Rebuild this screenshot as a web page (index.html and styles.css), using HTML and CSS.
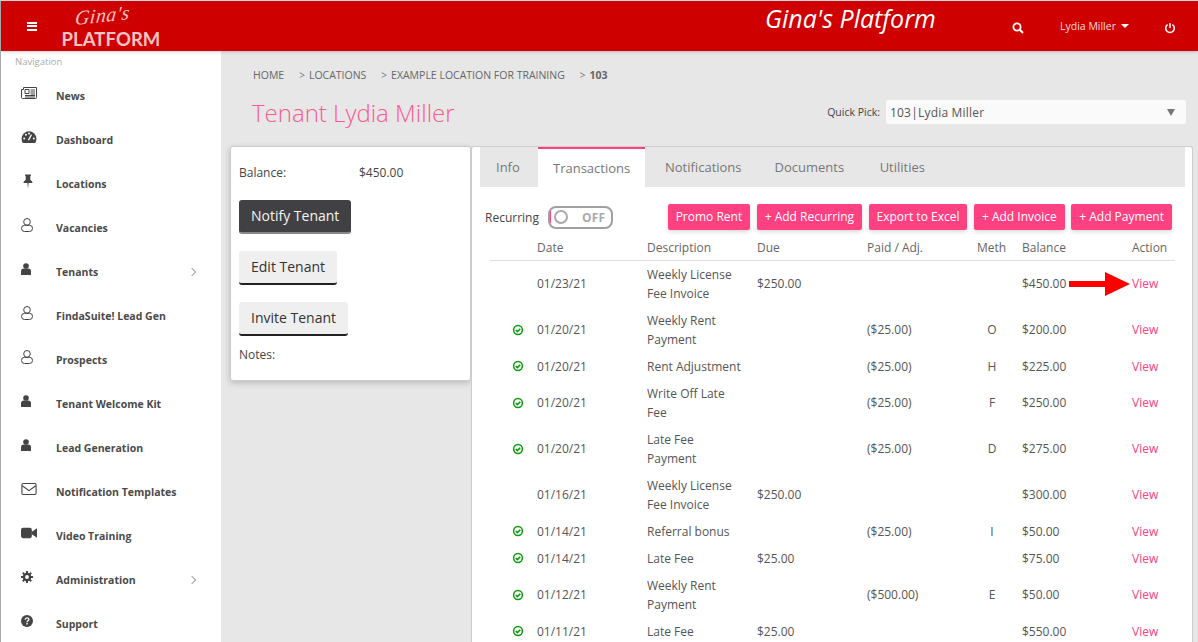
FILE: index.html
```html
<!DOCTYPE html>
<html lang="en">
<head>
<meta charset="utf-8">
<title>Tenant Lydia Miller</title>
<link rel="stylesheet" href="styles.css">
</head>
<body>
<svg class="sprite" xmlns="http://www.w3.org/2000/svg">
  <symbol id="i-check" viewBox="0 0 12 12"><circle cx="6" cy="6" r="4.400" fill="none" stroke="currentColor" stroke-width="1.500"/><path d="M3.800 6l1.600 1.600 2.900-2.900" fill="none" stroke="currentColor" stroke-width="1.500"/></symbol>
  <symbol id="i-user" viewBox="0 0 10 12"><circle cx="5" cy="3" r="2.800" fill="currentColor"/><path d="M0 12V8.200C0 6.600 1.200 5.500 2.600 5.500h4.800C8.800 5.500 10 6.600 10 8.200V12z" fill="currentColor"/></symbol>
  <symbol id="i-user-o" viewBox="0 0 12 14"><ellipse cx="6" cy="3.900" rx="3.300" ry="3.400" fill="none" stroke="currentColor" stroke-width="1"/><rect x=".5" y="7.300" width="11" height="6.200" rx="3" fill="none" stroke="currentColor" stroke-width="1"/></symbol>
</svg>

<header class="topbar">
  <button class="burger" aria-label="Menu"><span></span><span></span><span></span></button>
  <div class="logo"><span class="logo-script">Gina's</span><span class="logo-word">PLATFORM</span></div>
  <div class="brand-title">Gina's Platform</div>
  <svg class="top-search" viewBox="0 0 12 12"><circle cx="5" cy="5" r="3.600" fill="none" stroke="currentColor" stroke-width="1.800"/><path d="M7.800 7.800l3.200 3.200" stroke="currentColor" stroke-width="2"/></svg>
  <div class="top-user">Lydia Miller<span class="caret"></span></div>
  <svg class="top-power" viewBox="0 0 12 12"><path d="M3.600 2.600a4.300 4.300 0 1 0 4.800 0" fill="none" stroke="currentColor" stroke-width="1.500"/><path d="M6 1v5" stroke="currentColor" stroke-width="1.500"/></svg>
</header>

<div class="shell">
  <nav class="sidebar">
    <div class="nav-label">Navigation</div>
    <ul class="nav-list">
      <li class="nav-item"><svg class="nav-icon" viewBox="0 0 16 12"><path d="M2.500.5h13v10a1 1 0 0 1-1 1H1.500a1 1 0 0 1-1-1V2.500h2z" fill="none" stroke="currentColor"/><path d="M4 2.500h4v4H4zM9.500 3H14M9.500 5H14M9.500 7H14M4 8.500h10M4 10h10" fill="none" stroke="currentColor"/></svg><span>News</span></li>
      <li class="nav-item"><svg class="nav-icon" viewBox="0 0 14 11"><path d="M7 .2A6.800 6.800 0 0 0 .2 7c0 1.500.5 2.900 1.300 4h11c.8-1.100 1.300-2.500 1.300-4A6.800 6.800 0 0 0 7 .2z" fill="currentColor"/><path d="M6.500 8.500L9.300 3.300" stroke="#fff" stroke-width="1.200"/><circle cx="2.600" cy="6.800" r=".9" fill="#fff"/><circle cx="4.200" cy="3.400" r=".9" fill="#fff"/><circle cx="7" cy="2.300" r=".9" fill="#fff"/><circle cx="11.400" cy="6.800" r=".9" fill="#fff"/></svg><span>Dashboard</span></li>
      <li class="nav-item"><svg class="nav-icon narrow" viewBox="0 0 10 15"><path d="M2 .5h6v1.200H7.300v4.300c1.200.6 2.200 1.700 2.200 3H5.600L5 14.500l-.6-5.500H.5c0-1.300 1-2.400 2.200-3V1.700H2z" fill="currentColor"/></svg><span>Locations</span></li>
      <li class="nav-item"><svg class="nav-icon user"><use href="#i-user-o"/></svg><span>Vacancies</span></li>
      <li class="nav-item"><svg class="nav-icon solid"><use href="#i-user"/></svg><span>Tenants</span><span class="chev"></span></li>
      <li class="nav-item"><svg class="nav-icon user"><use href="#i-user-o"/></svg><span>FindaSuite! Lead Gen</span></li>
      <li class="nav-item"><svg class="nav-icon user"><use href="#i-user-o"/></svg><span>Prospects</span></li>
      <li class="nav-item"><svg class="nav-icon solid"><use href="#i-user"/></svg><span>Tenant Welcome Kit</span></li>
      <li class="nav-item"><svg class="nav-icon solid"><use href="#i-user"/></svg><span>Lead Generation</span></li>
      <li class="nav-item"><svg class="nav-icon" viewBox="0 0 14 11"><rect x=".5" y=".5" width="13" height="10" rx="1" fill="none" stroke="currentColor"/><path d="M.8 2.500L7 7l6.200-4.500" fill="none" stroke="currentColor"/></svg><span>Notification Templates</span></li>
      <li class="nav-item"><svg class="nav-icon" viewBox="0 0 14 10"><rect y=".5" width="9.500" height="9" rx="1.800" fill="currentColor"/><path d="M9.500 4L14 .8v8.400L9.500 6z" fill="currentColor"/></svg><span>Video Training</span></li>
      <li class="nav-item"><svg class="nav-icon cog" viewBox="0 0 12 12"><circle cx="6" cy="6" r="3.100" fill="none" stroke="currentColor" stroke-width="2.400"/><path d="M6 0v12M0 6h12M1.800 1.800l8.400 8.400M10.200 1.800l-8.400 8.400" stroke="currentColor" stroke-width="2" stroke-dasharray="2.200 7.600"/></svg><span>Administration</span><span class="chev"></span></li>
      <li class="nav-item"><svg class="nav-icon cog" viewBox="0 0 12 12"><circle cx="6" cy="6" r="6" fill="currentColor"/><path d="M4.200 4.700c0-2.300 3.700-2.300 3.700-.2 0 1.300-1.900 1.400-1.900 2.700" fill="none" stroke="#fff" stroke-width="1.300"/><path d="M6 8.100v1.500" stroke="#fff" stroke-width="1.400"/></svg><span>Support</span></li>
    </ul>
  </nav>

  <main class="content">
    <div class="crumbs"><span>HOME</span><span class="sep">&gt;</span><span>LOCATIONS</span><span class="sep">&gt;</span><span>EXAMPLE LOCATION FOR TRAINING</span><span class="sep">&gt;</span><b>103</b></div>
    <div class="title-row">
      <h1>Tenant Lydia Miller</h1>
      <div class="quick">
        <label>Quick Pick:</label>
        <div class="select"><span>103|Lydia Miller</span><i class="select-arrow"></i></div>
      </div>
    </div>
    <div class="panels">
      <section class="card">
        <div class="balance"><span>Balance:</span><span>$450.00</span></div>
        <button class="btn dark">Notify Tenant</button>
        <button class="btn">Edit Tenant</button>
        <button class="btn">Invite Tenant</button>
        <div class="notes">Notes:</div>
      </section>
      <section class="detail">
        <div class="tabs">
          <div class="tab">Info</div>
          <div class="tab active">Transactions</div>
          <div class="tab">Notifications</div>
          <div class="tab">Documents</div>
          <div class="tab">Utilities</div>
        </div>
        <div class="toolbar">
          <span class="rec-label">Recurring</span>
          <span class="toggle"><i class="knob"></i><b>OFF</b></span>
          <div class="actions">
            <button class="pink">Promo Rent</button>
            <button class="pink">+ Add Recurring</button>
            <button class="pink">Export to Excel</button>
            <button class="pink">+ Add Invoice</button>
            <button class="pink">+ Add Payment</button>
          </div>
        </div>
        <table class="ledger">
          <colgroup><col class="c-ic"><col class="c-w"><col class="c-w"><col class="c-w"><col class="c-w"><col class="c-m"><col class="c-b"><col class="c-a"></colgroup>
          <thead><tr><th></th><th>Date</th><th>Description</th><th>Due</th><th>Paid / Adj.</th><th>Meth</th><th>Balance</th><th>Action</th></tr></thead>
          <tbody>
            <tr><td></td><td>01/23/21</td><td>Weekly License Fee Invoice</td><td>$250.00</td><td></td><td class="m"></td><td>$450.00</td><td class="act"><svg class="arrow" viewBox="0 0 62 24"><path d="M0 9h36V0l25 12-25 12V15H0z" fill="#f00"/></svg><a>View</a></td></tr>
            <tr><td class="ok"><svg><use href="#i-check"/></svg></td><td>01/20/21</td><td>Weekly Rent Payment</td><td></td><td>($25.00)</td><td class="m">O</td><td>$200.00</td><td class="act"><a>View</a></td></tr>
            <tr><td class="ok"><svg><use href="#i-check"/></svg></td><td>01/20/21</td><td>Rent Adjustment</td><td></td><td>($25.00)</td><td class="m">H</td><td>$225.00</td><td class="act"><a>View</a></td></tr>
            <tr><td class="ok"><svg><use href="#i-check"/></svg></td><td>01/20/21</td><td>Write Off Late Fee</td><td></td><td>($25.00)</td><td class="m">F</td><td>$250.00</td><td class="act"><a>View</a></td></tr>
            <tr><td class="ok"><svg><use href="#i-check"/></svg></td><td>01/20/21</td><td>Late Fee Payment</td><td></td><td>($25.00)</td><td class="m">D</td><td>$275.00</td><td class="act"><a>View</a></td></tr>
            <tr><td></td><td>01/16/21</td><td>Weekly License Fee Invoice</td><td>$250.00</td><td></td><td class="m"></td><td>$300.00</td><td class="act"><a>View</a></td></tr>
            <tr><td class="ok"><svg><use href="#i-check"/></svg></td><td>01/14/21</td><td>Referral bonus</td><td></td><td>($25.00)</td><td class="m">I</td><td>$50.00</td><td class="act"><a>View</a></td></tr>
            <tr><td class="ok"><svg><use href="#i-check"/></svg></td><td>01/14/21</td><td>Late Fee</td><td>$25.00</td><td></td><td class="m"></td><td>$75.00</td><td class="act"><a>View</a></td></tr>
            <tr><td class="ok"><svg><use href="#i-check"/></svg></td><td>01/12/21</td><td>Weekly Rent Payment</td><td></td><td>($500.00)</td><td class="m">E</td><td>$50.00</td><td class="act"><a>View</a></td></tr>
            <tr><td class="ok"><svg><use href="#i-check"/></svg></td><td>01/11/21</td><td>Late Fee</td><td>$25.00</td><td></td><td class="m"></td><td>$550.00</td><td class="act"><a>View</a></td></tr>
          </tbody>
        </table>
      </section>
    </div>
  </main>
</div>
</body>
</html>
```

FILE: styles.css
```css
* { box-sizing: border-box; }
html, body { margin: 0; height: 642px; overflow: hidden; }
body {
  width: 1198px;
  background: #e7e7e7;
  color: #444;
  font: 12px/19px "Open Sans", sans-serif;
  border-left: 1px solid #a8a8a8;
  border-top: 1px solid #d8d8d8;
}
.sprite { position: absolute; width: 0; height: 0; }

.topbar {
  height: 50px;
  background: #cf0000;
  color: #fff;
  display: flex;
  align-items: center;
  box-shadow: 0 1px 3px rgba(0,0,0,.2);
  position: relative;
  z-index: 2;
}
.burger { width: 10px; height: 9px; margin-left: 26px; padding: 0; border: 0; background: none; display: flex; flex-direction: column; justify-content: space-between; }
.burger span { height: 2px; background: #fff; display: block; }
.logo { margin-left: 25px; width: 98px; height: 46px; display: flex; flex-direction: column; align-items: center; color: #f6c4c4; margin-top: 2px; }
.logo-script { font: italic 20px/22px "Liberation Serif", serif; margin: 0 0 2px -16px; letter-spacing: .5px; height: 24px; transform: rotate(-6deg) skewX(-12deg); }
.logo-word { font: 700 18.500px/18px "Lato", sans-serif; letter-spacing: .05px; white-space: nowrap; }
.brand-title { margin-left: 605px; margin-top: -16px; font: italic 400 25px/32px "Open Sans", sans-serif; white-space: nowrap; width: 171px; }
.top-search { width: 12px; height: 12px; margin-left: 76px; margin-top: 4px; }
.top-user { margin-left: 36px; font-size: 10.500px; color: #f7dede; white-space: nowrap; display: flex; align-items: center; margin-top: 0; width: 71px; }
.caret { border: 4px solid transparent; border-top-color: #fff; border-bottom: 0; margin-left: 5px; }
.top-power { width: 12px; height: 12px; margin-left: 33px; margin-top: 4px; }

.shell { display: flex; height: 591px; }
.sidebar { width: 220px; background: #fff; flex: none; overflow: hidden; }
.nav-label { font-size: 9.500px; line-height: 12px; color: #aaa; padding: 5px 0 0 14px; }
.nav-list { list-style: none; margin: 6px 0 0; padding: 0; }
.nav-item { height: 44px; display: flex; align-items: center; padding-left: 20px; position: relative; font-size: 10.500px; font-weight: 700; color: #4a4a4a; white-space: nowrap; }
.nav-item > span:first-of-type { margin-left: 35px; position: absolute; left: 20px; }
.nav-icon { width: 16px; height: 12px; color: #444; margin-top: -6px; }
.nav-icon.narrow { height: 15px; width: 10px; margin-left: 2px; }
.nav-icon.user { width: 12px; height: 14px; }
.nav-icon.solid { width: 10px; height: 12px; }
.nav-icon.cog { width: 12px; height: 12px; }
.chev { position: absolute; left: 188px; width: 6px; height: 6px; border-top: 1px solid #a0a0b0; border-right: 1px solid #a0a0b0; transform: rotate(45deg); }

.content { flex: 1; min-width: 0; padding: 14px 5px 0 9px; }
.crumbs { font-size: 10.500px; line-height: 20px; color: #666; padding-left: 23px; display: flex; white-space: nowrap; }
.crumbs .sep { font-size: 10px; margin: 0 4px 0 15px; color: #777; }
.crumbs b { font-weight: 700; }
.title-row { display: flex; justify-content: space-between; align-items: center; margin-top: 10px; padding-left: 22px; height: 36px; }
h1 { margin: 0; font-size: 24px; font-weight: 300; line-height: 36px; color: #fb5a8e; white-space: nowrap; }
.quick { display: flex; align-items: center; margin-right: 7px; margin-top: -2px; }
.quick label { font-size: 10.500px; color: #444; margin-right: 6px; }
.select { width: 300px; height: 24px; background: #fafafa; border-radius: 2px; display: flex; align-items: center; justify-content: space-between; padding: 0 11px 0 4px; font-size: 12px; letter-spacing: .2px; color: #555; }
.select-arrow { border: 4px solid transparent; border-top: 7px solid #777; border-bottom: 0; }

.panels { display: flex; align-items: flex-start; margin-top: 15px; }
.card { width: 241px; height: 235px; background: #fff; border: 1px solid #ccc; border-radius: 3px; padding: 16px 8px 0; box-shadow: 0 2px 6px rgba(0,0,0,.2); flex: none; }
.balance { display: flex; height: 19px; }
.balance span:first-child { width: 120px; }
.btn { display: block; height: 34px; margin: 0 0 17px; padding: 0 12px; border: 0; border-bottom: 2px solid #222; border-radius: 3px; background: #efefef; color: #333; font: 14px/30px "Open Sans", sans-serif; }
.balance + .btn { margin-top: 18px; }
.btn.dark { background: #414042; color: #f4f4f4; border-bottom-color: #888; }
.notes { margin-top: -8px; }

.detail { width: 722px; height: 500px; background: #fff; border: 1px solid #ccc; border-bottom: 0; border-radius: 3px 3px 0 0; padding: 0 7px 0 8px; flex: none; }
.tabs { display: flex; height: 40px; background: #e7e7e7; font-size: 13px; color: #777; }
.tab { height: 40px; padding: 0 17.500px; line-height: 40px; white-space: nowrap; }
.tab:first-child { padding: 0 16px; width: 58px; }
.tab.active { background: #fff; border-top: 2px solid #ff4081; padding: 0 15px; width: 107px; line-height: 38px; }
.tab:nth-child(3) { padding-left: 20px; padding-right: 15.500px; }
.tab:nth-child(4) { padding-right: 18px; }

.toolbar { display: flex; align-items: center; height: 26px; margin-top: 17px; padding-left: 5px; }
.rec-label { width: 63px; color: #444; white-space: nowrap; }
.toggle { width: 65px; height: 23px; border: 2px solid #a0a0a0; border-radius: 8px; display: flex; align-items: center; }
.toggle::before { content: ""; width: 1px; height: 12px; background: #ff4081; margin-right: 3px; }
.knob { width: 14px; height: 14px; border: 2px solid #aaa; border-radius: 50%; }
.toggle b { color: #aaa; font-size: 12px; margin-left: 14px; letter-spacing: .2px; }
.actions { display: flex; gap: 6.500px; margin-left: auto; margin-right: 13px; }
.pink { height: 26px; padding: 0 8px; border: 0; border-radius: 2px; background: #ff4081; color: #fff; font: 12px/26px "Open Sans", sans-serif; white-space: nowrap; box-shadow: 0 2px 4px rgba(0,0,0,.15); }

.ledger { width: 685px; margin: 3px 0 0 10px; table-layout: fixed; border-collapse: collapse; color: #555; }
.c-ic { width: 40px; }
.c-w { width: 110px; }
.c-m { width: 45px; }
.c-b { width: 110px; }
.c-a { width: 50px; }
.ledger th { font-weight: 400; text-align: left; padding: 5px 7px 3px; color: #666; line-height: 19px; white-space: nowrap; border-bottom: 1px solid #ddd; }
.ledger th:last-child { padding-right: 0; }
.ledger td { padding: 3.500px 7px 4.500px; vertical-align: middle; }
.ledger .m { text-align: center; padding-right: 8px; }
.ledger td.ok { color: #0a9a0a; padding: 0 6px 1px 0; }
.ok svg { width: 12px; height: 12px; display: block; margin-left: auto; }
.act { position: relative; }
.act a { color: #ff4081; }
.arrow { position: absolute; right: 44px; top: 11px; width: 62px; height: 24px; }
```
